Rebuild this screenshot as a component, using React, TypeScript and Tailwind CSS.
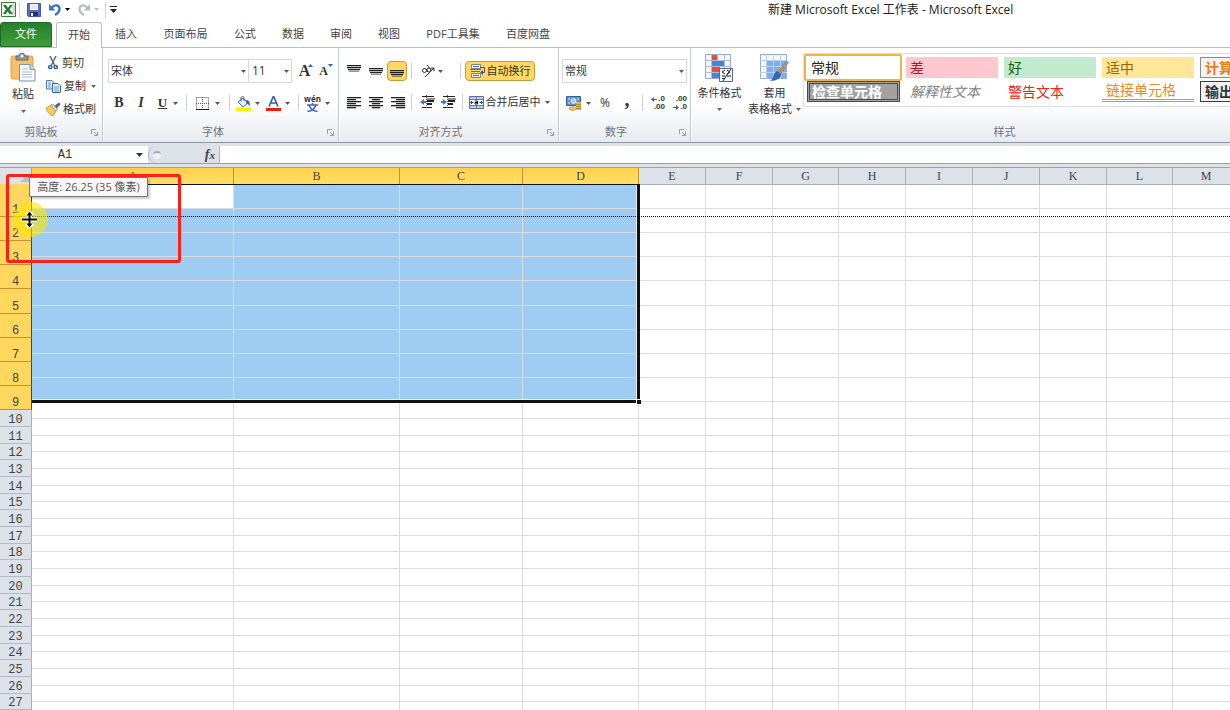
import type { ReactNode } from "react";
import clsx from "clsx";

const tabs = [
    { name: "插入", width: "w-12" },
    { name: "页面布局", width: "w-[71px]" },
    { name: "公式", width: "w-12" },
    { name: "数据", width: "w-12" },
    { name: "审阅", width: "w-12" },
    { name: "视图", width: "w-12" },
    { name: "PDF工具集", width: "w-20" },
    { name: "百度网盘", width: "w-[70px]" },
];

const columns = [
    { name: "A", width: "w-[202px]" },
    { name: "B", width: "w-[166px]" },
    { name: "C", width: "w-[123px]" },
    { name: "D", width: "w-[116px]" },
    { name: "E", width: "w-[67px]" },
    { name: "F", width: "w-[67px]" },
    { name: "G", width: "w-[66px]" },
    { name: "H", width: "w-[67px]" },
    { name: "I", width: "w-[67px]" },
    { name: "J", width: "w-[67px]" },
    { name: "K", width: "w-[67px]" },
    { name: "L", width: "w-[66px]" },
    { name: "M", width: "w-[67px]" },
    { name: "N", width: "w-[67px]" },
    { name: "O", width: "w-[67px]" },
    { name: "P", width: "w-[67px]" },
];

const SELECTED_ROWS = 9;
const SELECTED_COLS = 4;
const rows = Array.from({ length: 40 }, (_, i) => i + 1);

function rowHeight(n: number) {
    if (n <= SELECTED_ROWS) return n === 5 ? "h-[25px]" : "h-6";
    return n % 3 === 0 ? "h-4" : "h-[17px]";
}

function Caret({ className }: { className?: string }) {
    return (
        <svg width="5" height="3" viewBox="0 0 5 3" className={clsx("shrink-0", className)}>
            <path d="M0 0h5L2.5 3z" fill="currentColor" />
        </svg>
    );
}

function Divider({ className }: { className?: string }) {
    return <span className={clsx("h-4 w-px shrink-0 bg-[#cdd2da]", className)} />;
}

function IconButton({ label, active, className, children }: { label: string; active?: boolean; className?: string; children: ReactNode }) {
    return (
        <button
            aria-label={label}
            className={clsx(
                "flex h-5 shrink-0 items-center justify-center",
                active && "rounded-sm border border-[#c99a3a] bg-[#ffd863]",
                className
            )}
        >
            {children}
        </button>
    );
}

function Group({ title, launcher, className, children }: { title: string; launcher?: boolean; className?: string; children: ReactNode }) {
    return (
        <section className={clsx("relative flex shrink-0 flex-col border-r border-[#c6cbd3] shadow-[1px_0_0_#fff]", className)}>
            <div className="flex-1">{children}</div>
            <h2 className={clsx("pb-1 text-center text-[11px] leading-3 text-[#6c7380]", launcher && "pr-5")}>{title}</h2>
            {launcher && (
                <button aria-label={`${title}设置`} className="absolute right-1 bottom-1.5">
                    <svg width="7" height="7" viewBox="0 0 7 7" fill="none" stroke="#979da8">
                        <path d="M.5 5V.5H5M3 3l3 3M6.5 3v3.5H3" />
                    </svg>
                </button>
            )}
        </section>
    );
}

function Lines({ widths, align }: { widths: number[]; align: "left" | "center" | "right" }) {
    return (
        <svg width="14" height="14" viewBox="0 0 14 14" fill="#222">
            {widths.map((w, i) => (
                <rect
                    key={i}
                    x={align === "left" ? 0 : align === "right" ? 14 - w : (14 - w) / 2}
                    y={2 + i * 2}
                    width={w}
                    height="1.3"
                />
            ))}
        </svg>
    );
}

function VerticalLines({ top }: { top: number }) {
    return (
        <svg width="14" height="14" viewBox="0 0 14 14" fill="#222">
            <rect x="0" y={top} width="14" height="1.3" />
            <rect x="0" y={top + 2} width="14" height="1.3" />
            <rect x="1" y={top + 4} width="12" height="1.3" />
            <rect x="2" y={top + 6} width="10" height="1" opacity=".5" />
        </svg>
    );
}

function IndentIcon({ increase }: { increase?: boolean }) {
    return (
        <svg width="16" height="14" viewBox="0 0 16 14">
            <path d="M2 1.5h12M7 4h8M2 12.5h10" stroke="#222" fill="none" />
            <path d="M7 6h7M7 9h5" stroke="#222" strokeWidth="2" />
            <path d="M6.5 0v14" stroke="#555" strokeDasharray="1 1" />
            <path d={increase ? "M0 6h2V4l4 3-4 3V8H0z" : "M6 6H4V4L0 7l4 3V8h2z"} fill="#3f77c9" />
        </svg>
    );
}

function SaveIcon() {
    return (
        <svg width="14" height="14" viewBox="0 0 14 14">
            <path d="M.5.5h13v13h-12l-1-1z" fill="#5b6bc4" stroke="#4a57ac" />
            <path d="M3 1h8v6H3z" fill="#f2f6ff" />
            <path d="M4 3h6M4 5h6" stroke="#d3ddf0" />
            <path d="M3 9h8v4H3z" fill="#27306f" />
            <path d="M4 10h2v3H4z" fill="#fff" />
        </svg>
    );
}

function ExcelIcon() {
    return (
        <svg width="15" height="15" viewBox="0 0 15 15">
            <path d="M.5.5h14v14H.5z" fill="#f0f8ec" stroke="#3b7d3c" />
            <path d="M10 3h3v9h-3" fill="#fff" stroke="#a9cfa2" />
            <path d="M10 6h3M10 9h3" stroke="#a9cfa2" />
            <path d="M2 3h3l2 3 2-3h2.5L8.500 7.500 12 12H8.500L6.500 9.300 5 12H2l3-4.500z" fill="#257c35" />
        </svg>
    );
}

function UndoIcon({ className, flip }: { className: string; flip?: boolean }) {
    return (
        <svg width="12" height="13" viewBox="0 0 12 13" className={className}>
            <g transform={flip ? "matrix(-1 0 0 1 12 0)" : undefined}>
                <path d="M3 4.500C5.500 1 10.500 2 10.500 6c0 3-2 4.500-4.500 6" fill="none" stroke="currentColor" strokeWidth="2.400" />
                <path d="M0 1v6.500h6.500z" fill="currentColor" />
            </g>
        </svg>
    );
}

function PasteIcon() {
    return (
        <svg width="26" height="29" viewBox="0 0 26 29">
            <rect x="1" y="3" width="22" height="23" rx="2" fill="#f6c069" stroke="#d99f4d" />
            <path d="M6 3h3c0-4 6-4 6 0h3v4H6z" fill="#8e949c" stroke="#656b73" />
            <circle cx="12" cy="3" r="1.500" fill="#fff" />
            <path d="M9.500 11.500H20l5 5V28H9.500z" fill="#f7faff" stroke="#7d90ad" />
            <path d="M20 11.500v5h5" fill="#c9d9ef" stroke="#7d90ad" />
            <path d="M12 16h6M12 19h10M12 21.500h10M12 24h10" stroke="#a8bddc" />
        </svg>
    );
}

function CutIcon() {
    return (
        <svg width="10" height="14" viewBox="0 0 10 14" fill="none">
            <path d="M2 0l4.500 9M8 0L3.500 9" stroke="#5a6b84" strokeWidth="1.500" />
            <circle cx="2.300" cy="11" r="1.600" stroke="#2d5fae" strokeWidth="1.500" />
            <circle cx="7.700" cy="11" r="1.600" stroke="#2d5fae" strokeWidth="1.500" />
        </svg>
    );
}

function CopyIcon() {
    return (
        <svg width="15" height="13" viewBox="0 0 15 13">
            <path d="M.5.5H6l2 2V9H.5z" fill="#e4eefc" stroke="#4c79b8" />
            <path d="M6.500 3.500H12l2.500 2.500v6.500h-8z" fill="#e4eefc" stroke="#3a68aa" />
            <path d="M2 3h3M2 5h3M2 7h3M8 7h5M8 9h5M8 11h5" stroke="#6b97d3" />
        </svg>
    );
}

function BrushIcon() {
    return (
        <svg width="15" height="14" viewBox="0 0 15 14">
            <path d="M0 6l5-3 5 6-3 5C4 13 1 10 0 6z" fill="#f0cb5d" stroke="#b78a2b" strokeWidth=".7" />
            <path d="M5 3l2-1 4.500 5.500L10 9z" fill="#fff" stroke="#777" strokeWidth=".7" />
            <path d="M8.500 3.800L13 .5l1.500 1.700-3.800 4.300z" fill="#565c68" />
        </svg>
    );
}

function BucketIcon() {
    return (
        <svg width="15" height="15" viewBox="0 0 15 15" className="shrink-0">
            <path d="M2 6l5-4 5 5-5 4z" fill="#e6effa" stroke="#476b9f" />
            <path d="M5 5V2c0-2 3-2 3 0v3" fill="none" stroke="#555" />
            <path d="M10 4c3 0 4.500 2 3.500 6.500-1-2-1.500-3-3.500-3z" fill="#3668b5" />
            <path d="M0 11.500h15V15H0z" fill="#fff200" />
        </svg>
    );
}

function MergeIcon() {
    return (
        <svg width="15" height="13" viewBox="0 0 15 13" className="shrink-0">
            <path d="M.5.5h14v12H.5z" fill="#b9cfec" stroke="#586f94" />
            <path d="M0 3.500h15M0 9.500h15M7.500 0v3M7.500 10v3" stroke="#5f7ba8" />
            <path d="M1 4h13v5H1z" fill="#fff" />
            <path d="M4.500 6.500H1.500M10.500 6.500h3M3 5L1.500 6.500 3 8M12 5l1.500 1.500L12 8" stroke="#26497f" fill="none" />
            <path d="M6 5h2.500v3H6V6.500h2.500" stroke="#111" fill="none" />
        </svg>
    );
}

function WrapIcon() {
    return (
        <svg width="16" height="15" viewBox="0 0 16 15" className="shrink-0">
            <path d="M1.500.5h9v4h-9zM1.500 9.500h9v4h-9z" fill="#e9eef7" stroke="#77839a" />
            <path d="M0 5.500h11M1 7.500h9M3 2.500h6M3 11.500h6" stroke="#626f88" />
            <path d="M10 3.500h4.500v5H12" fill="none" stroke="#44546f" />
            <path d="M13 6v5l-3-2.500z" fill="#44546f" />
        </svg>
    );
}

function CurrencyIcon() {
    return (
        <svg width="16" height="15" viewBox="0 0 16 15" className="shrink-0">
            <path d="M.5.5h14v9H.5z" fill="#5f90cf" stroke="#315f9f" />
            <circle cx="7.500" cy="5" r="2.500" fill="#a9c9ef" stroke="#fff" strokeWidth=".7" />
            <path d="M2 3h2M11 3h2M2 7h2" stroke="#d9e8fa" />
            <path d="M10 6h5v8h-5z" fill="#e5b648" />
            <path d="M10 8.500h5M10 10.500h5M10 12.500h5" stroke="#b98a2d" />
            <ellipse cx="6.500" cy="12.500" rx="3.500" ry="1.800" fill="#f0c763" stroke="#b3832a" strokeWidth=".7" />
        </svg>
    );
}

function ConditionalIcon() {
    return (
        <svg width="29" height="28" viewBox="0 0 29 28">
            <path d="M.5.5h25v24H.5z" fill="#f4f8fe" stroke="#93abd0" />
            <path d="M7 1h5v5H7zM7 12h8v6H7z" fill="#f0492c" />
            <path d="M7 6h12v6H7zM7 18h7v6H7z" fill="#4a83d8" />
            <path d="M6.500 0v25M12.500 0v6M19.500 0v25M0 6.500h26M0 12.500h26M0 18.500h26" stroke="#a9bfdf" fill="none" />
            <path d="M14.500 14.500h13v13h-13z" fill="#f5f8fc" stroke="#5d6b80" />
            <path d="M20 16l-3 2 3 2M17 22h3M17 24.500h3M22 16l3 2-3 2M22 22h4M26 15l-8 12" stroke="#222" fill="none" />
        </svg>
    );
}

function TableStyleIcon() {
    return (
        <svg width="29" height="28" viewBox="0 0 29 28">
            <path d="M.5.5h26v24H.5z" fill="#f4f8fe" stroke="#93abd0" />
            <path d="M7 7h19v17H7z" fill="#81aeea" />
            <path d="M6.500 0v25M13.500 0v25M20.500 0v25M0 6.500h27M0 12.500h27M0 18.500h27" stroke="#b9cff0" fill="none" />
            <path d="M26.500 7l2 1.500L20.500 20l-3-2z" fill="#9a9ea6" stroke="#666b75" strokeWidth=".6" />
            <path d="M23 12l2.500 2L21 20l-3-2z" fill="#c08a52" />
            <path d="M17 17l4 3c0 4-4 7-11 7 4-2 3-8 7-10z" fill="#3167ad" />
        </svg>
    );
}

function DecimalIcon({ increase }: { increase?: boolean }) {
    const arrow = (
        <svg width="6" height="5" viewBox="0 0 6 5" className="shrink-0">
            <path d={increase ? "M6 2H3V0L0 2.500 3 5V3h3z" : "M0 2h3V0l3 2.500L3 5V3H0z"} fill="#3464ae" />
        </svg>
    );
    const short = <span className="flex items-center justify-end gap-px">{arrow}.0</span>;
    return (
        <span className="flex flex-col text-right font-['Liberation_Sans'] text-[8px] leading-2 font-bold">
            {increase ? <>{short}<span>.00</span></> : <><span>.00</span>{short}</>}
        </span>
    );
}

function TitleBar() {
    return (
        <header className="flex h-[22px] shrink-0 items-start pt-0.5">
            <div className="flex h-[15px] w-[120px] shrink-0 items-center pl-px">
                <ExcelIcon />
                <Divider className="mx-[3px]" />
                <button aria-label="保存" className="ml-1 flex"><SaveIcon /></button>
                <button aria-label="撤消" className="ml-2 flex items-center gap-1">
                    <UndoIcon className="text-[#3a72c4]" />
                    <Caret className="text-black" />
                </button>
                <button aria-label="恢复" className="ml-2 flex items-center gap-1 text-[#b9bcc1]">
                    <UndoIcon flip className="text-[#b9bcc1]" />
                    <Caret />
                </button>
                <Divider className="ml-1.5" />
                <button aria-label="自定义快速访问工具栏" className="ml-1 flex">
                    <svg width="7" height="7" viewBox="0 0 7 7"><path d="M0 0h7v1H0zM0 3h7L3.500 7z" fill="#222" /></svg>
                </button>
            </div>
            <h1 className="ml-[648px] shrink-0 text-xs text-[#222]">新建 Microsoft Excel 工作表 - Microsoft Excel</h1>
        </header>
    );
}

function TabStrip() {
    return (
        <nav className="flex h-[26px] shrink-0 border-b border-[#b9bec7] text-[11px] text-[#444]">
            <button className="w-[52px] rounded-t-[3px] border border-[#1c6a25] bg-linear-to-b from-[#28802f] to-[#3f9b35] text-white">文件</button>
            <button className="-mb-px ml-1 w-[46px] rounded-t-[3px] border border-b-0 border-[#b9bec7] bg-white">开始</button>
            {tabs.map((tab) => (
                <button key={tab.name} className={clsx("shrink-0 whitespace-nowrap", tab.width)}>
                    {tab.name}
                </button>
            ))}
        </nav>
    );
}

function ClipboardGroup() {
    return (
        <Group title="剪贴板" launcher className="w-[103px]">
            <div className="flex">
                <button className="flex w-[46px] flex-col items-center pt-[5px]">
                    <PasteIcon />
                    <span className="mt-1 leading-4">粘贴</span>
                    <Caret className="mt-2 text-[#666]" />
                </button>
                <div className="flex flex-col gap-[3px] pt-[5px] leading-5">
                    <button className="flex items-center gap-1 pl-0.5"><CutIcon />剪切</button>
                    <button className="flex items-center gap-[3px]"><CopyIcon />复制<Caret className="ml-0.5 text-[#666]" /></button>
                    <button className="flex items-center gap-0.5 whitespace-nowrap"><BrushIcon />格式刷</button>
                </div>
            </div>
        </Group>
    );
}

function FontGroup() {
    return (
        <Group title="字体" launcher className="w-[236px] pl-[5px]">
            <div className="flex items-center pt-[11px]">
                <label className="flex h-6 w-[141px] items-center border border-[#d5d9df] bg-white pr-0.5">
                    <input aria-label="字体名称" defaultValue="宋体" className="min-w-0 flex-1 pl-0.5 outline-none" />
                    <Caret className="text-[#555]" />
                </label>
                <label className="flex h-6 w-[43px] items-center border border-l-0 border-[#d5d9df] bg-white pr-0.5">
                    <input aria-label="字号" defaultValue="11" className="min-w-0 flex-1 pl-[3px] text-xs outline-none" />
                    <Caret className="text-[#555]" />
                </label>
                <IconButton label="增大字号" className="ml-1 w-5">
                    <b className="font-['Liberation_Serif'] text-base">A</b>
                    <svg width="5" height="3" viewBox="0 0 5 3" className="-ml-0.5 mb-3"><path d="M0 3h5L2.500 0z" fill="#3464ae" /></svg>
                </IconButton>
                <IconButton label="减小字号" className="w-5">
                    <b className="font-['Liberation_Serif'] text-xs">A</b>
                    <Caret className="mb-3 text-[#3464ae]" />
                </IconButton>
            </div>
            <div className="mt-2.5 flex items-center">
                <IconButton label="加粗" className="w-[22px]"><b className="font-['Liberation_Serif'] text-sm">B</b></IconButton>
                <IconButton label="倾斜" className="w-[22px]"><i className="font-['Liberation_Serif'] text-sm font-bold">I</i></IconButton>
                <IconButton label="下划线" className="w-7 gap-1.5 pl-1"><u className="font-['Liberation_Serif'] text-[13px] font-bold">U</u><Caret className="text-[#555]" /></IconButton>
                <Divider className="ml-1.5" />
                <IconButton label="边框" className="ml-2 w-[26px] gap-1.5">
                    <svg width="13" height="13" viewBox="0 0 13 13" fill="none" stroke="#555" className="shrink-0"><path d="M.5.5h12v12M.5.5v12M6.500 0v12M0 6.500h13" strokeDasharray="1 1" /><path d="M0 12.500h13" stroke="#222" /></svg>
                    <Caret className="text-[#555]" />
                </IconButton>
                <Divider className="ml-2" />
                <IconButton label="填充颜色" className="ml-1.5 w-6 gap-1"><BucketIcon /><Caret className="text-[#555]" /></IconButton>
                <IconButton label="字体颜色" className="ml-1.5 w-6 gap-1">
                    <svg width="15" height="15" viewBox="0 0 15 15" className="shrink-0"><path d="M3 10.500L7.500 0 12 10.500M5 7h5" stroke="#36609e" strokeWidth="1.600" fill="none" /><path d="M0 12h15v3H0z" fill="#f51b0c" /></svg>
                    <Caret className="text-[#555]" />
                </IconButton>
                <Divider className="ml-2" />
                <IconButton label="拼音指南" className="ml-1.5 w-6 gap-1">
                    <span className="flex flex-col items-center font-bold">
                        <span className="text-[8px] leading-2">wén</span>
                        <svg width="11" height="9" viewBox="0 0 11 9" fill="none" stroke="#3e5fc1" strokeWidth="1.400"><path d="M5.500 0v2M0 2h11M2 2c1 3 4 6 8.500 6.500M9 2C8 5 5 8 .5 8.500" /></svg>
                    </span>
                    <Caret className="text-[#555]" />
                </IconButton>
            </div>
        </Group>
    );
}

function AlignGroup() {
    return (
        <Group title="对齐方式" launcher className="w-[220px] pl-1">
            <div className="mt-3 flex h-[22px] items-center">
                <IconButton label="顶端对齐" className="w-[22px]"><VerticalLines top={1} /></IconButton>
                <IconButton label="垂直居中" className="w-[22px]"><VerticalLines top={4} /></IconButton>
                <IconButton label="底端对齐" active className="w-5"><VerticalLines top={6} /></IconButton>
                <Divider className="ml-1" />
                <IconButton label="方向" className="ml-2 w-6 gap-0.5">
                    <svg width="15" height="14" viewBox="0 0 15 14" fill="none" stroke="#333" className="shrink-0"><circle cx="3.500" cy="6.500" r="2" /><path d="M5 5l2 3M6 1l4 5M4 13l9-9M10 4h3v3" /><circle cx="8" cy="6" r="2" /></svg>
                    <Caret className="text-[#555]" />
                </IconButton>
                <Divider className="ml-4" />
                <IconButton label="自动换行" active className="ml-1 w-[70px] gap-px whitespace-nowrap"><WrapIcon />自动换行</IconButton>
            </div>
            <div className="mt-2.5 flex items-center">
                <IconButton label="文本左对齐" className="w-[22px]"><Lines align="left" widths={[14, 9, 14, 9, 14, 9]} /></IconButton>
                <IconButton label="居中" className="w-[22px]"><Lines align="center" widths={[14, 8, 14, 8, 14, 8]} /></IconButton>
                <IconButton label="文本右对齐" className="w-[22px]"><Lines align="right" widths={[14, 9, 14, 9, 14, 9]} /></IconButton>
                <Divider className="ml-0.5" />
                <IconButton label="减少缩进量" className="ml-1.5 w-5"><IndentIcon /></IconButton>
                <IconButton label="增加缩进量" className="w-[22px]"><IndentIcon increase /></IconButton>
                <Divider className="ml-0.5" />
                <IconButton label="合并后居中" className="ml-1 w-[84px] gap-0.5 whitespace-nowrap"><MergeIcon />合并后居中<Caret className="ml-0.5 text-[#555]" /></IconButton>
            </div>
        </Group>
    );
}

function NumberGroup() {
    return (
        <Group title="数字" launcher className="w-[132px] pl-[3px]">
            <label className="mt-[11px] flex h-6 w-[125px] items-center border border-[#d5d9df] bg-white pr-0.5">
                <input aria-label="数字格式" defaultValue="常规" className="min-w-0 flex-1 pl-0.5 outline-none" />
                <Caret className="text-[#555]" />
            </label>
            <div className="mt-2.5 flex items-center">
                <IconButton label="会计数字格式" className="w-8 gap-1"><CurrencyIcon /><Caret className="text-[#555]" /></IconButton>
                <IconButton label="百分比样式" className="w-[22px] text-xs">%</IconButton>
                <IconButton label="千位分隔样式" className="w-[22px]"><b className="pb-2 font-['Liberation_Serif'] text-xl">,</b></IconButton>
                <Divider className="ml-1" />
                <IconButton label="增加小数位数" className="ml-1 w-[22px]"><DecimalIcon increase /></IconButton>
                <IconButton label="减少小数位数" className="w-[22px]"><DecimalIcon /></IconButton>
            </div>
        </Group>
    );
}

function StylesGroup() {
    return (
        <Group title="样式" className="min-w-[628px] flex-1">
            <div className="flex">
                <button className="flex w-[57px] shrink-0 flex-col items-center pt-1.5 whitespace-nowrap">
                    <ConditionalIcon />
                    <span className="mt-[3px] leading-4">条件格式</span>
                    <Caret className="mt-[7px] text-[#666]" />
                </button>
                <button className="flex w-[53px] shrink-0 flex-col items-center pt-1.5 whitespace-nowrap">
                    <TableStyleIcon />
                    <span className="mt-[3px] leading-4">套用</span>
                    <span className="flex items-center gap-1 leading-4">表格格式<Caret className="text-[#666]" /></span>
                </button>
                <div className="mt-[5px] ml-0.5 grid h-[54px] w-[492px] shrink-0 grid-cols-[repeat(5,98px)] grid-rows-[27px_25px] border-y border-l border-[#dadde2] bg-white font-['Liberation_Sans','Noto_Sans_CJK_SC',sans-serif] text-sm leading-4 whitespace-nowrap [&>button]:text-left">
                    <button className="rounded-[2px] border-2 border-[#efb73f] pl-[5px] text-[#222]">常规</button>
                    <button className="my-[3px] mr-0.5 ml-1 bg-[#ffc7ce] pl-1 text-[#a81d23]">差</button>
                    <button className="my-[3px] mr-0.5 ml-1 bg-[#c2ebcd] pl-1 text-[#146314]">好</button>
                    <button className="my-[3px] mr-0.5 ml-1 bg-[#ffe699] pl-1 text-[#9c6500]">适中</button>
                    <button className="my-[3px] mr-0.5 ml-1 border border-[#8c8c8c] bg-[#f2f2f2] pl-1 font-bold text-[#ee7d12]">计算</button>
                    <button className="mr-0.5 mb-1 ml-[3px] border-3 border-double border-[#4b4b4b] bg-[#a2a2a2] pl-0.5 leading-3 font-bold text-white">检查单元格</button>
                    <button className="mr-0.5 mb-1 ml-1 pl-1 text-[#7f7f7f] italic">解释性文本</button>
                    <button className="mr-0.5 mb-1 ml-1 pl-1 text-[#f42015]">警告文本</button>
                    <button className="mr-0.5 mb-1 ml-1 border-b-3 border-double border-[#ea8b2c] pl-1 text-[#ee8a22]">链接单元格</button>
                    <button className="mr-0.5 mb-1 ml-1 border border-[#3f3f3f] bg-[#f2f2f2] pl-1 font-bold text-[#333]">输出</button>
                </div>
            </div>
        </Group>
    );
}

function FormulaBar() {
    return (
        <div className="mt-[3px] flex h-[18px] shrink-0 items-center border-b border-[#9aa0ab] bg-[#dde1e8]">
            <label className="flex h-full w-[148px] items-center bg-white pr-[5px]">
                <input aria-label="名称框" defaultValue="A1" className="w-[130px] pt-px text-center font-['Liberation_Mono'] text-xs outline-none" />
                <svg width="7" height="4" viewBox="0 0 7 4" className="ml-auto"><path d="M0 0h7L3.500 4z" fill="#333" /></svg>
            </label>
            <div className="flex h-full w-[72px] items-center justify-between rounded-l-full border border-y-0 border-[#b1b6be] pr-1 pl-1">
                <span className="size-2 rounded-full border-t-2 border-[#a5aab2] bg-[#eef0f4]" />
                <button aria-label="插入函数" className="font-['Liberation_Serif'] text-sm leading-4 font-bold text-[#444] italic">f<span className="text-[11px]">x</span></button>
            </div>
            <input aria-label="编辑栏" className="h-full min-w-0 flex-1 bg-white px-1 outline-none" />
        </div>
    );
}

function Sheet() {
    return (
        <main className="relative mt-[3px] flex min-h-0 flex-1 overflow-hidden border-t border-[#9aa0ab] bg-white">
            {/* Row headers, already stretched by the resize drag on row 1 */}
            <div className="w-8 shrink-0 font-['Liberation_Mono'] text-xs text-[#444]">
                <div className="flex h-4 items-end justify-end border-r border-[#9aa0ab] bg-[#dde1e8] p-0.5">
                    <svg width="9" height="9" viewBox="0 0 9 9"><path d="M9 0v9H0z" fill="#b9bec8" /></svg>
                </div>
                {rows.map((n) => (
                    <div
                        key={n}
                        className={clsx(
                            "flex items-end justify-center border-r border-b leading-3",
                            n === 1 ? "h-[33px]" : rowHeight(n),
                            n <= SELECTED_ROWS ? "border-[#c9902b] border-r-[#5b430f] bg-[#ffd75e]" : "border-[#b4bac4] border-r-[#a9b0bb] bg-[#dde1e8]"
                        )}
                    >
                        {n}
                    </div>
                ))}
            </div>

            <div className="relative min-w-0 flex-1 overflow-hidden">
                <table className="w-[1409px] table-fixed border-separate border-spacing-0">
                    <colgroup>
                        {columns.map((col) => (
                            <col key={col.name} className={col.width} />
                        ))}
                    </colgroup>
                    <thead>
                        <tr>
                            {columns.map((col, i) => (
                                <th
                                    key={col.name}
                                    scope="col"
                                    className={clsx(
                                        "h-[17px] border-r border-b p-0 font-['Liberation_Serif'] text-xs leading-4 font-normal text-[#444]",
                                        i < SELECTED_COLS ? "border-[#c9902b] border-b-[#5b430f] bg-linear-to-b from-[#ffcf4b] to-[#ffe068]" : "border-[#a9b0bb] bg-[#dde1e8]"
                                    )}
                                >
                                    {col.name}
                                </th>
                            ))}
                        </tr>
                    </thead>
                    <tbody>
                        {rows.map((n) => (
                            <tr key={n}>
                                {columns.map((col, i) => (
                                    <td
                                        key={col.name}
                                        className={clsx(
                                            "border-r border-b border-[#dadcdf] p-0",
                                            rowHeight(n),
                                            n <= SELECTED_ROWS && i < SELECTED_COLS && !(n === 1 && i === 0) && "bg-[#9fccf2]"
                                        )}
                                    />
                                ))}
                            </tr>
                        ))}
                    </tbody>
                </table>

                {/* Selection frame with fill handle */}
                <div className="pointer-events-none absolute top-4 left-0 h-[219px] w-[608px] border-t border-r-3 border-b-3 border-[#111] shadow-[inset_-1px_-1px_0_#e6f1fb]">
                    <span className="absolute -right-1 -bottom-1 size-[5px] border-t border-l border-white bg-[#111]" />
                </div>
            </div>

            {/* Drag guide */}
            <div className="pointer-events-none absolute top-12 right-0 left-8 border-t border-dotted border-black" />

            {/* Cursor highlight */}
            <div className="pointer-events-none absolute top-[34px] left-[13px] flex size-[35px] items-center justify-center rounded-full bg-[#ffe600]/60">
                <svg width="17" height="17" viewBox="0 0 17 17" className="mr-0.5">
                    <path d="M1 8.500h15M8.500 2v13M5.500 4.500l3-3 3 3M5.500 12.500l3 3 3-3" fill="none" stroke="#fff" strokeWidth="4" />
                    <path d="M1 8.500h15M8.500 2v13" stroke="#111" strokeWidth="2" />
                    <path d="M5.500 4.500l3-4 3 4zM5.500 12.500l3 4 3-4z" fill="#111" />
                </svg>
            </div>

            {/* Marked area */}
            <div className="pointer-events-none absolute top-1.5 left-1.5 h-[89px] w-[175px] rounded-[3px] border-3 border-[#ff2018]" />
            <div role="tooltip" className="absolute top-[9px] left-[29px] h-5 w-[119px] rounded-[1px] border border-[#767676] bg-[#f8f8fb] text-center text-[11px] leading-[18px] whitespace-nowrap text-[#555] shadow-[2px_2px_2px_#0003]">
                高度: 26.25 (35 像素)
            </div>
        </main>
    );
}

export default function App() {
    return (
        <div className="flex h-screen flex-col overflow-hidden bg-white font-['Open_Sans','Noto_Sans_CJK_SC',sans-serif] text-[11px] text-[#333]">
            <TitleBar />
            <TabStrip />
            <div className="flex h-[95px] shrink-0 overflow-hidden border-b border-[#8f96a3] bg-linear-to-b from-white from-60% to-[#e7eaef]">
                <ClipboardGroup />
                <FontGroup />
                <AlignGroup />
                <NumberGroup />
                <StylesGroup />
            </div>
            <div className="flex min-h-0 flex-1 flex-col bg-[#dde1e8]">
                <FormulaBar />
                <Sheet />
            </div>
        </div>
    );
}
